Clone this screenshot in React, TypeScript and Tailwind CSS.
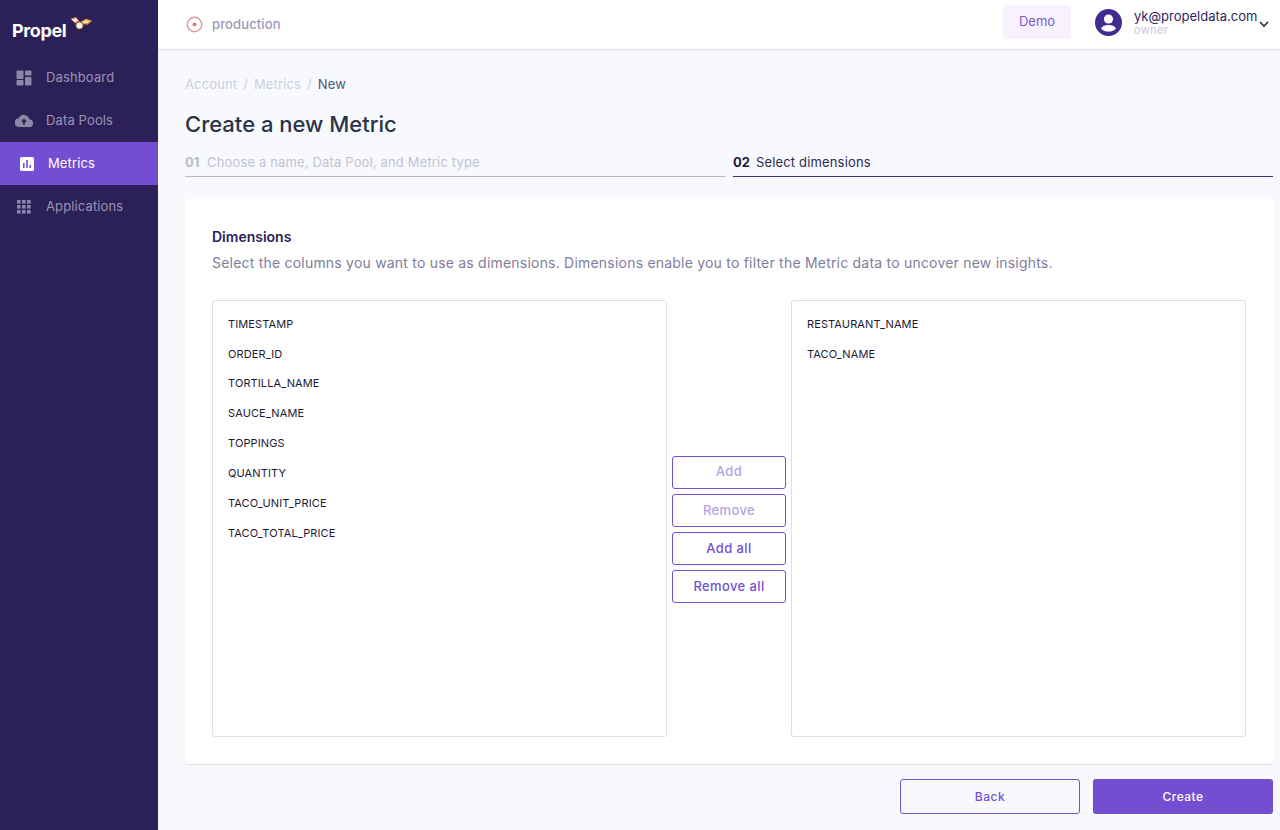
import React from "react";

const left = ["TIMESTAMP", "ORDER_ID", "TORTILLA_NAME", "SAUCE_NAME", "TOPPINGS", "QUANTITY", "TACO_UNIT_PRICE", "TACO_TOTAL_PRICE"];
const right = ["RESTAURANT_NAME", "TACO_NAME"];

function ListBox({ items }: { items: string[] }) {
  return (
    <div className="flex-1 h-[437px] bg-white border border-[#dfdfe3] rounded-[3px] pl-[15px] pt-[8px]">
      {items.map((t) => (
        <div key={t} className="h-[29.9px] flex items-center text-[11px] text-[#1d1933] tracking-[0.01em]">{t}</div>
      ))}
    </div>
  );
}

function SideBtn({ label, faded }: { label: string; faded?: boolean }) {
  return (
    <div className={`w-[114px] h-[33px] border border-[#7450d2] rounded-[3px] flex items-center justify-center text-[13px] font-medium tracking-[0.03em] ${faded ? "text-[#b5a2e6]" : "text-[#7450d2]"}`}>
      {label}
    </div>
  );
}

function NavItem({ label, icon, active }: { label: string; icon: React.ReactNode; active?: boolean }) {
  return (
    <div className={`h-[43px] flex items-center ${active ? "bg-[#744ed2] text-white pl-[18px]" : "text-[#9a93b4] pl-[15px]"}`}>
      <div className="w-[18px] h-[18px] flex items-center justify-center">{icon}</div>
      <span className={`text-[13px] tracking-[0.01em] ${active ? "ml-[12px]" : "ml-[13px]"}`}>{label}</span>
    </div>
  );
}

export default function App() {
  return (
    <div className="flex w-[1280px] h-[830px] overflow-hidden bg-[#f8f9fd] font-['Inter',sans-serif]">
      <aside className="w-[158px] shrink-0 bg-[#2c2058]">
        <div className="h-[56px] pl-[12px] pt-[17px] flex items-start relative">
          <span className="text-white text-[18px] font-bold leading-[28px] tracking-[-0.02em]">Propel</span>
          <svg className="absolute left-[69px] top-[16px]" width="24" height="20" viewBox="0 0 24 20" fill="none">
            <path d="M2 3 L7 1.5 L10 5 L6 7 Z" fill="#f4eee6" stroke="#d9673a" strokeWidth="1" />
            <path d="M11 7 L17 3.5 L22 5 L18 8 Z" fill="#f8e6b0" stroke="#e09a2c" strokeWidth="1.2" />
            <circle cx="10.5" cy="9.5" r="3.6" fill="#f7f3ea" stroke="#8a6a4a" strokeWidth="1" />
          </svg>
        </div>
        <div className="mt-[0px]">
          <NavItem label="Dashboard" icon={
            <svg width="16" height="16" viewBox="0 0 16 16" fill="#8d86a8"><rect x="0.5" y="0.5" width="7" height="8.5" rx="1" /><rect x="9" y="0.5" width="6.5" height="5" rx="1" /><rect x="0.5" y="10" width="7" height="5.5" rx="1" /><rect x="9" y="7" width="6.5" height="8.5" rx="1" /></svg>
          } />
          <NavItem label="Data Pools" icon={
            <svg width="18" height="14" viewBox="0 0 18 14"><path d="M14.4 5.2A5.6 5.6 0 0 0 3.9 4 4.4 4.4 0 0 0 4.2 13H14a3.9 3.9 0 0 0 .4-7.8Z" fill="#8d86a8" /><path d="M9 4.6 12 7.8H10V10.4H8V7.8H6Z" fill="#2c2058" /></svg>
          } />
          <NavItem active label="Metrics" icon={
            <svg width="16" height="16" viewBox="0 0 16 16"><rect x="1" y="1" width="14" height="14" rx="1.5" fill="#fff" /><rect x="4" y="7" width="1.6" height="5" fill="#744ed2" /><rect x="7.2" y="4" width="1.6" height="8" fill="#744ed2" /><rect x="10.4" y="9" width="1.6" height="3" fill="#744ed2" /></svg>
          } />
          <NavItem label="Applications" icon={
            <svg width="14" height="14" viewBox="0 0 14 14" fill="#8d86a8">
              {[0, 5, 10].flatMap((y) => [0, 5, 10].map((x) => <rect key={`${x}-${y}`} x={x} y={y} width="3.6" height="3.6" />))}
            </svg>
          } />
        </div>
      </aside>

      <div className="flex-1 min-w-0 flex flex-col">
        <header className="h-[50px] shrink-0 bg-white border-b border-[#e2e2e6] shadow-[0_1px_2px_rgba(0,0,0,0.04)] flex items-center pl-[28px] pr-[10px]">
          <svg width="17" height="17" viewBox="0 0 17 17" fill="none"><circle cx="8.5" cy="8.5" r="7.2" stroke="#de9a9a" strokeWidth="1.4" /><circle cx="8.5" cy="8.5" r="2" fill="#d97a7a" /></svg>
          <span className="ml-[9px] text-[13px] font-medium text-[#9d99b5] tracking-[0.01em]">production</span>
          <div className="ml-auto w-[68px] h-[34px] mb-[5px] mr-[24px] rounded-[3px] bg-[#f7f2fe] flex items-center justify-center text-[13px] text-[#7c5bd6]">Demo</div>
          <svg className="mb-[4px]" width="27" height="27" viewBox="0 0 27 27"><circle cx="13.5" cy="13.5" r="13.5" fill="#432c91" /><circle cx="13.5" cy="10" r="4.6" fill="#fff" /><path d="M6 19.5C7.5 16.8 10 16 13.5 16S19.5 16.8 21 19.5C19.5 21.5 17 22.6 13.5 22.6S7.5 21.5 6 19.5Z" fill="#fff" /></svg>
          <div className="ml-[12px] mb-[4px] w-[117px] flex flex-col">
            <span className="text-[13px] leading-[15px] text-[#2f2760]">yk@propeldata.com</span>
            <span className="text-[11px] leading-[13px] text-[#cbc9d8] tracking-[0.03em]">owner</span>
          </div>
          <svg className="ml-[7px] mb-[2px]" width="12" height="8" viewBox="0 0 12 8" fill="none"><path d="M2 2 L6 6 L10 2" stroke="#2a2a38" strokeWidth="1.6" /></svg>
        </header>

        <main className="flex-1 min-h-0 pl-[27px] pr-[7px] flex flex-col">
          <div className="mt-[26px] h-[18px] flex items-center text-[13px] tracking-[0.01em]">
            <span className="text-[#c9d0e0]">Account</span>
            <span className="text-[#c9d0e0] mx-[6px]">/</span>
            <span className="text-[#c9d0e0]">Metrics</span>
            <span className="text-[#c9d0e0] mx-[6px]">/</span>
            <span className="text-[#4e5a74]">New</span>
          </div>
          <h1 className="mt-[15px] text-[22px] leading-[30px] font-medium text-[#2a3449]">Create a new Metric</h1>

          <div className="mt-[11px] flex gap-[8px]">
            <div className="w-[540px] h-[27px] border-b border-[#b9b9c5] flex items-center">
              <span className="text-[13px] font-bold text-[#b8bcc8] w-[22px]">01</span>
              <span className="text-[13px] text-[#c3c2d4] tracking-[0.012em]">Choose a name, Data Pool, and Metric type</span>
            </div>
            <div className="flex-1 h-[27px] border-b border-[#3d2f7a] flex items-center">
              <span className="text-[13px] font-bold text-[#1f1a3d] w-[23px]">02</span>
              <span className="text-[13px] text-[#2f2a4f] tracking-[0.012em]">Select dimensions</span>
            </div>
          </div>

          <section className="mt-[22px] h-[566px] bg-white rounded-[4px] border-b border-[#e0e0e5] px-[27px] pt-[29px]">
            <h2 className="text-[14px] leading-[18px] font-semibold text-[#2c2058]">Dimensions</h2>
            <p className="mt-[7px] text-[14px] leading-[20px] text-[#817d9c] tracking-[0.015em]">Select the columns you want to use as dimensions. Dimensions enable you to filter the Metric data to uncover new insights.</p>
            <div className="mt-[27px] flex items-stretch">
              <ListBox items={left} />
              <div className="w-[124px] shrink-0 flex flex-col items-center justify-center gap-[5.3px] pt-[22px]">
                <SideBtn label="Add" faded />
                <SideBtn label="Remove" faded />
                <SideBtn label="Add all" />
                <SideBtn label="Remove all" />
              </div>
              <ListBox items={right} />
            </div>
          </section>

          <div className="mt-[14px] flex justify-end gap-[13px]">
            <div className="w-[180px] h-[35px] border border-[#7450d2] rounded-[3px] flex items-center justify-center text-[12px] font-medium tracking-[0.04em] text-[#7450d2]">Back</div>
            <div className="w-[180px] h-[35px] bg-[#744ed2] rounded-[3px] flex items-center justify-center text-[12px] font-medium tracking-[0.04em] text-white">Create</div>
          </div>
        </main>
      </div>
    </div>
  );
}
